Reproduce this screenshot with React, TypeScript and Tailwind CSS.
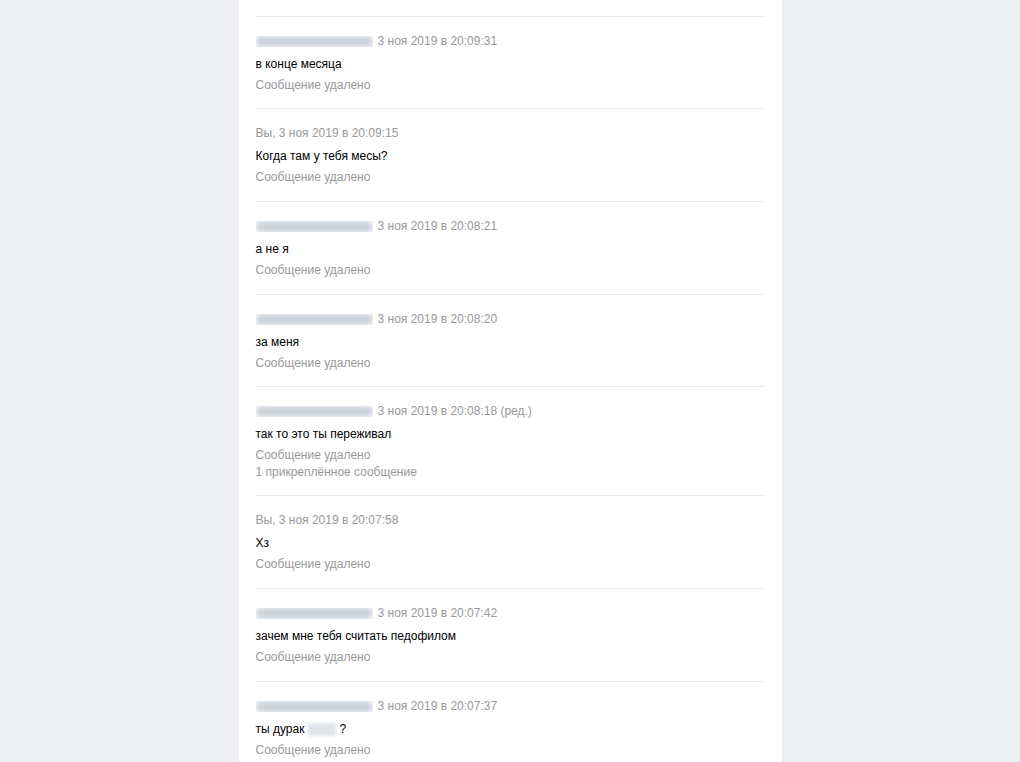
const messages = [
  { mine: false, date: '3 ноя 2019 в 20:09:31', text: 'в конце месяца', tight: true },
  { mine: true, date: '3 ноя 2019 в 20:09:15', text: 'Когда там у тебя месы?' },
  { mine: false, date: '3 ноя 2019 в 20:08:21', text: 'а не я' },
  { mine: false, date: '3 ноя 2019 в 20:08:20', text: 'за меня', tight: true },
  {
    mine: false,
    date: '3 ноя 2019 в 20:08:18 (ред.)',
    text: 'так то это ты переживал',
    attached: '1 прикреплённое сообщение',
  },
  { mine: true, date: '3 ноя 2019 в 20:07:58', text: 'Хз' },
  { mine: false, date: '3 ноя 2019 в 20:07:42', text: 'зачем мне тебя считать педофилом' },
  { mine: false, date: '3 ноя 2019 в 20:07:37', text: 'ты дурак', hidden: true },
];

function BlurName() {
  return (
    <span className="inline-block w-[117px] h-[11px] mr-[5px] overflow-hidden">
      <span className="block w-full h-full rounded-sm bg-[#cbd2db] blur-[2.5px]" />
    </span>
  );
}

export default function App() {
  return (
    <div
      className="min-h-[762px] bg-[#edeef0] flex justify-center"
      style={{ fontFamily: '"Liberation Sans", Arial, sans-serif' }}
    >
      <div className="w-[543px] bg-white px-[17px] pt-[16px] text-[12px]">
        {messages.map((m, i) => (
          <div
            key={i}
            className={`border-t border-[#e7e8ec] pt-[15px] ${m.tight ? 'pb-[14px]' : 'pb-[15px]'}`}
          >
            <div className="h-[18px] leading-[18px] text-[#999999] flex items-center">
              {m.mine ? (
                <span>Вы, {m.date}</span>
              ) : (
                <>
                  <BlurName />
                  <span>{m.date}</span>
                </>
              )}
            </div>
            <div className="mt-[5px] leading-[18px] text-black flex items-center">
              <span>{m.text}</span>
              {m.hidden && (
                <>
                  <span className="inline-block w-[28px] h-[13px] ml-[4px] mr-[3px] bg-[#e1e4e8] blur-[1.5px]" />
                  <span>?</span>
                </>
              )}
            </div>
            <div className="mt-[3px] leading-[18px] text-[#999999]">Сообщение удалено</div>
            {m.attached && (
              <div className="leading-[16px] text-[#999999]">{m.attached}</div>
            )}
          </div>
        ))}
      </div>
    </div>
  );
}
